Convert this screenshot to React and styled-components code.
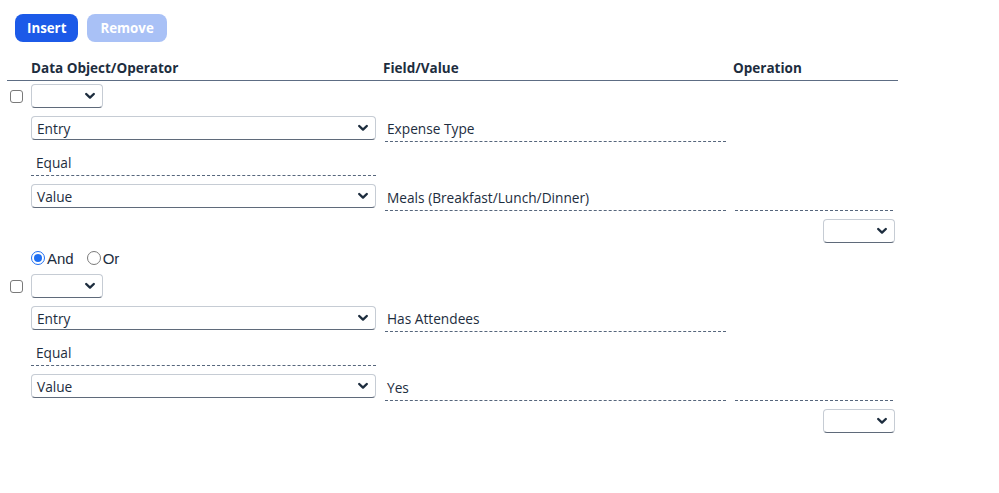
import styled, { createGlobalStyle } from 'styled-components';

const Global = createGlobalStyle`
  body {
    margin: 0;
    background: #fff;
    font-family: "Open Sans", "Liberation Sans", sans-serif;
    color: #1d2d3e;
  }
`;

const Page = styled.div`
  padding: 14px 0 0 7px;
`;

const Toolbar = styled.div`
  display: flex;
  gap: 9px;
  margin-left: 8px;
`;

const Button = styled.button`
  height: 28px;
  padding: 0 ${p => (p.disabled ? 13 : 12)}px;
  border: none;
  border-radius: 8px;
  font-family: "Open Sans", sans-serif;
  font-size: 13.3px;
  font-weight: 700;
  color: #fff;
  background: ${p => (p.disabled ? '#a9c1f6' : '#1c5ae8')};
`;

const cols = '15px 345px 341px 163px';

const HeaderRow = styled.div`
  display: grid;
  grid-template-columns: ${cols};
  column-gap: 9px;
  width: 891px;
  margin-top: 17px;
  padding-bottom: 3px;
  border-bottom: 1px solid #5d6d84;
`;

const HeaderCell = styled.div`
  font-size: 13.5px;
  font-weight: 700;
  line-height: 18px;
  margin-left: ${p => p.$shift || 0}px;
`;

const Block = styled.div`
  display: grid;
  grid-template-columns: ${cols};
  column-gap: 9px;
  row-gap: 8px;
  width: 891px;
  margin-top: ${p => p.$top}px;
  align-items: start;
`;

const CheckCell = styled.div`
  height: 24px;
  display: flex;
  align-items: center;
  padding-left: 3px;
`;

const Checkbox = styled.span`
  flex: none;
  width: 11px;
  height: 11px;
  border: 1px solid #7a7a7a;
  border-radius: 3px;
`;

const SelectBox = styled.div`
  box-sizing: border-box;
  width: ${p => (p.$small ? '72px' : '100%')};
  height: 24px;
  display: flex;
  align-items: center;
  justify-content: space-between;
  padding: 0 6px 0 5px;
  border: 1px solid #c6ccd4;
  border-bottom: 1px solid #5f6a7a;
  border-radius: 4px;
  background: #fff;
  font-size: 13.7px;
  justify-self: ${p => (p.$end ? 'end' : 'start')};
  margin-right: ${p => (p.$end ? '3px' : '0')};
`;

const DashedCell = styled.div`
  box-sizing: border-box;
  height: ${p => p.$h || 26}px;
  display: flex;
  align-items: center;
  padding-left: ${p => p.$pad || 2}px;
  border-bottom: 1px dashed #56667c;
  font-size: 13.7px;
  margin-right: ${p => p.$mr || 0}px;
`;

const Spacer = styled.div``;

const RadioRow = styled.div`
  display: flex;
  align-items: center;
  margin: 7px 0 0 24px;
  height: 16px;
  font-family: "Liberation Sans", Arial, sans-serif;
  font-size: 15px;
`;

const RadioLabel = styled.label`
  display: flex;
  align-items: center;
  gap: 2px;
  margin-right: 13px;
`;

const Radio = styled.span`
  box-sizing: border-box;
  width: 14px;
  height: 14px;
  border-radius: 50%;
  border: 1px solid ${p => (p.$on ? '#1f6ff2' : '#7a7a7a')};
  display: flex;
  align-items: center;
  justify-content: center;
  &::after {
    content: '';
    width: 8px;
    height: 8px;
    border-radius: 50%;
    background: ${p => (p.$on ? '#1f6ff2' : 'transparent')};
  }
`;

function Chevron() {
  return (
    <svg width="12" height="8" viewBox="0 0 12 8">
      <path d="M2.2 2 L6 5.6 L9.8 2" fill="none" stroke="#1d2d3e" strokeWidth="2.4" strokeLinecap="round" strokeLinejoin="round" />
    </svg>
  );
}

function Select({ value, small, end }) {
  return (
    <SelectBox $small={small} $end={end}>
      <span>{value}</span>
      <Chevron />
    </SelectBox>
  );
}

function Condition({ top, field, value }) {
  return (
    <Block $top={top}>
      <CheckCell><Checkbox /></CheckCell>
      <Select small />
      <Spacer />
      <Spacer />

      <Spacer />
      <Select value="Entry" />
      <DashedCell>{field}</DashedCell>
      <Spacer />

      <Spacer />
      <DashedCell $pad={5}>Equal</DashedCell>
      <Spacer />
      <Spacer />

      <Spacer />
      <Select value="Value" />
      <DashedCell $h={27}>{value}</DashedCell>
      <DashedCell $h={27} $mr={5} />

      <Spacer />
      <Spacer />
      <Spacer />
      <Select small end />
    </Block>
  );
}

export default function App() {
  return (
    <Page>
      <Global />
      <Toolbar>
        <Button>Insert</Button>
        <Button disabled>Remove</Button>
      </Toolbar>
      <HeaderRow>
        <Spacer />
        <HeaderCell>Data Object/Operator</HeaderCell>
        <HeaderCell $shift={-2}>Field/Value</HeaderCell>
        <HeaderCell $shift={-2}>Operation</HeaderCell>
      </HeaderRow>
      <Condition top={3} field="Expense Type" value="Meals (Breakfast/Lunch/Dinner)" />
      <RadioRow>
        <RadioLabel><Radio $on />And</RadioLabel>
        <RadioLabel><Radio />Or</RadioLabel>
      </RadioRow>
      <Condition top={8} field="Has Attendees" value="Yes" />
    </Page>
  );
}
